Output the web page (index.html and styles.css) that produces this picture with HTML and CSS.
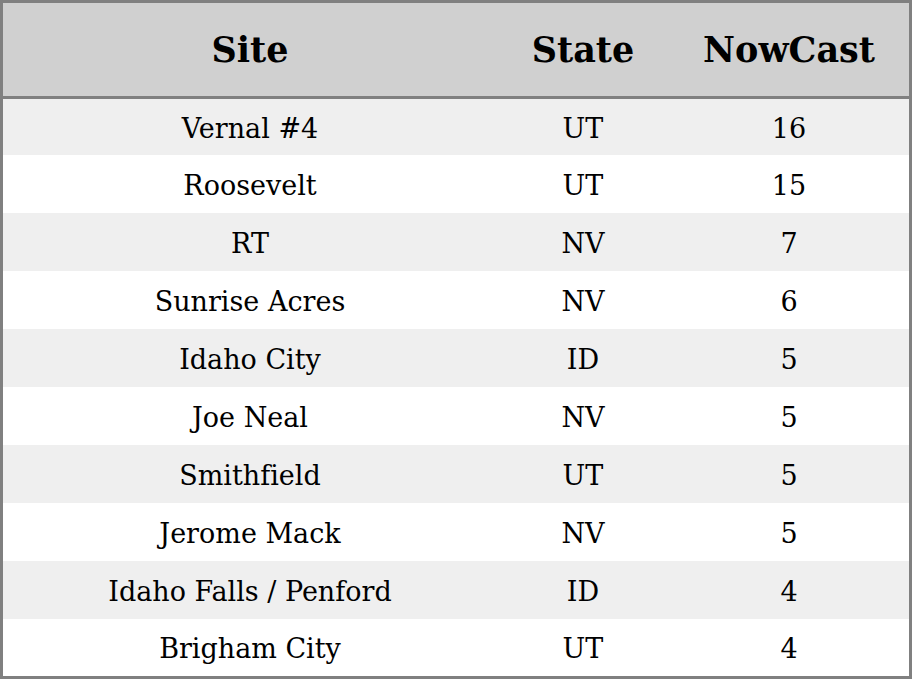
FILE: index.html
```html
<!DOCTYPE html>
<html>
<head>
<meta charset="utf-8">
<link rel="stylesheet" href="styles.css">
</head>
<body>
<table class="aq">
  <colgroup>
    <col class="c-site">
    <col class="c-state">
    <col class="c-now">
  </colgroup>
  <thead>
    <tr><th>Site</th><th>State</th><th>NowCast</th></tr>
  </thead>
  <tbody>
    <tr><td>Vernal #4</td><td>UT</td><td>16</td></tr>
    <tr><td>Roosevelt</td><td>UT</td><td>15</td></tr>
    <tr><td>RT</td><td>NV</td><td>7</td></tr>
    <tr><td>Sunrise Acres</td><td>NV</td><td>6</td></tr>
    <tr><td>Idaho City</td><td>ID</td><td>5</td></tr>
    <tr><td>Joe Neal</td><td>NV</td><td>5</td></tr>
    <tr><td>Smithfield</td><td>UT</td><td>5</td></tr>
    <tr><td>Jerome Mack</td><td>NV</td><td>5</td></tr>
    <tr><td>Idaho Falls / Penford</td><td>ID</td><td>4</td></tr>
    <tr><td>Brigham City</td><td>UT</td><td>4</td></tr>
  </tbody>
</table>
</body>
</html>
```
FILE: styles.css
```css
html, body {
  margin: 0;
  padding: 0;
  background: #ffffff;
}
.aq {
  width: 912px;
  height: 679px;
  border-collapse: separate;
  border-spacing: 0;
  border: 3px solid #808080;
  box-sizing: border-box;
  table-layout: fixed;
  font-family: "DejaVu Serif", serif;
  font-variant-ligatures: none;
  color: #000;
}
.c-site { width: 494px; }
.c-state { width: 172px; }
.c-now { width: 240px; }
.aq th {
  height: 93px;
  background: #d0d0d0;
  font-size: 35px;
  font-weight: bold;
  text-align: center;
  border-bottom: 3px solid #808080;
  padding: 0;
}
.aq td {
  height: 58px;
  box-sizing: border-box;
  font-size: 27px;
  line-height: 1;
  text-align: center;
  padding: 2px 0 0;
}
.aq tbody tr:first-child td { height: 56px; }
.aq tbody tr:last-child td { height: 57px; }
.aq tbody tr:nth-child(odd) td { background: #efefef; }
.aq tbody tr:nth-child(even) td { background: #ffffff; }
```
